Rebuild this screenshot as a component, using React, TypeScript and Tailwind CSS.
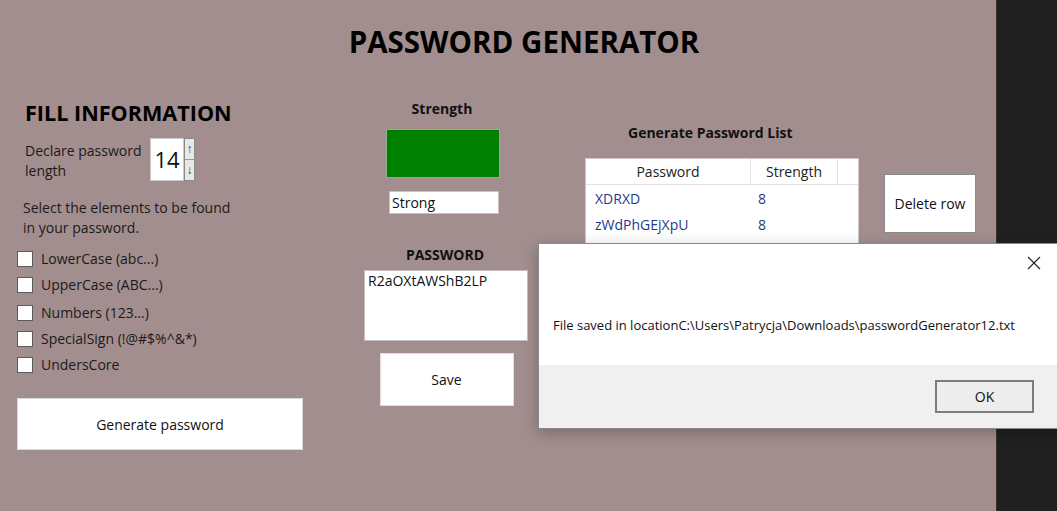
import React from 'react'

const font = { fontFamily: '"Open Sans", "Noto Sans", sans-serif' }

const options = ['LowerCase (abc...)', 'UpperCase (ABC...)', 'Numbers (123...)', 'SpecialSign (!@#$%^&*)', 'UndersCore']

const rows = [
  { password: 'XDRXD', strength: 8 },
  { password: 'zWdPhGEjXpU', strength: 8 },
]

const FillInformation: React.FC = () => {
  return (
    <div className="ml-[17px] w-[286px] pt-[2px]">
      <h2 className="ml-[8px] text-[21.6px] font-bold leading-[26px] text-black">FILL INFORMATION</h2>
      <div className="ml-[8px] mt-[12px] flex items-start">
        <p className="w-[125px] pt-[3px] text-[14px] leading-[20px] text-[#1a1a1a]">Declare password length</p>
        <div className="flex h-[43px]">
          <div className="flex w-[34px] items-center justify-center border border-[#d0c8c8] bg-white text-[22px] text-[#111]">14</div>
          <div className="flex w-[11px] flex-col border border-[#8a8a8a] bg-[#e8e8e8] text-[12px] leading-none text-[#333]">
            <span className="flex flex-1 items-center justify-center border-b border-[#9a9a9a]">↑</span>
            <span className="flex flex-1 items-center justify-center">↓</span>
          </div>
        </div>
      </div>
      <p className="ml-[6px] mt-[17px] w-[220px] text-[14px] leading-[20px] text-[#1a1a1a]">
        Select the elements to be found in your password.
      </p>
      <div className="mt-[12px] flex flex-col gap-[8px]">
        {options.map((o, i) => (
          <label key={o} className={`flex items-center gap-[8px] ${i === 2 ? 'mt-[2px]' : ''}`}>
            <span className="h-[16px] w-[16px] border border-[#5a5a5a] bg-white" />
            <span className="text-[14px] leading-[18px] text-[#1a1a1a]">{o}</span>
          </label>
        ))}
      </div>
      <button className="mt-[24px] h-[52px] w-[286px] border border-[#d8d8d8] bg-white text-[14px] text-[#111]">
        Generate password
      </button>
    </div>
  )
}

const StrengthColumn: React.FC = () => {
  return (
    <div className="ml-[61px] flex w-[164px] flex-col items-center">
      <h3 className="ml-[-8px] mt-[2px] text-[14px] font-bold leading-[18px] text-[#111]">Strength</h3>
      <div className="ml-[-6px] mt-[11px] h-[49px] w-[114px] border border-[#8fb08f] bg-[#008000]" />
      <div className="ml-[-4px] mt-[13px] flex h-[23px] w-[110px] items-center border border-[#c8c0c0] bg-white px-[2px] text-[14px] text-[#111]">
        Strong
      </div>
      <h3 className="ml-[-2px] mt-[32px] text-[14px] font-bold leading-[18px] text-[#111]">PASSWORD</h3>
      <div className="mt-[6px] h-[71px] w-[164px] border border-[#c8c0c0] bg-white px-[3px] pt-[1px] text-[14px] leading-[18px] text-[#111]">
        R2aOXtAWShB2LP
      </div>
      <button className="ml-[1px] mt-[12px] h-[53px] w-[134px] border border-[#ecd8d8] bg-white text-[14px] text-[#111]">
        Save
      </button>
    </div>
  )
}

const PasswordList: React.FC = () => {
  return (
    <div className="ml-[57px] mt-[26px] flex w-[274px] flex-col">
      <h3 className="ml-[43px] text-[14px] font-bold leading-[18px] text-[#111]">Generate Password List</h3>
      <div className="mt-[16px] h-[90px] w-[274px] border border-[#d0c8c8] bg-white">
        <div className="flex h-[26px] border-b border-[#e2e2e2] text-[14px] text-[#222]">
          <div className="flex w-[165px] items-center justify-center border-r border-[#e2e2e2]">Password</div>
          <div className="flex w-[87px] items-center justify-center border-r border-[#e2e2e2]">Strength</div>
        </div>
        {rows.map((r) => (
          <div key={r.password} className="flex h-[26px] items-center text-[14px] text-[#1f3a87]">
            <span className="w-[165px] pl-[9px]">{r.password}</span>
            <span className="pl-[7px]">{r.strength}</span>
          </div>
        ))}
      </div>
    </div>
  )
}

const SavedDialog: React.FC = () => {
  return (
    <div className="absolute left-[538px] top-[243px] flex h-[186px] w-[530px] flex-col border border-[#8a8a8a] bg-white shadow-[0_4px_14px_rgba(0,0,0,0.25)]">
      <div className="relative flex-1">
        <svg className="absolute right-[26px] top-[12px]" width="14" height="14" viewBox="0 0 14 14">
          <path d="M1 1 L13 13 M13 1 L1 13" stroke="#222" strokeWidth="1.1" />
        </svg>
        <p className="pl-[14px] pt-[72px] text-[13px] text-[#111]">
          File saved in locationC:\Users\Patrycja\Downloads\passwordGenerator12.txt
        </p>
      </div>
      <div className="flex h-[63px] items-start justify-end bg-[#f0f0f0] pr-[33px] pt-[15px]">
        <button className="h-[33px] w-[99px] border-2 border-[#7d7d7d] bg-[#ededed] text-[14px] text-[#111]">OK</button>
      </div>
    </div>
  )
}

const App: React.FC = () => {
  return (
    <div className="relative flex h-[511px] w-[1057px] overflow-hidden" style={font}>
      <div className="w-[996px] bg-[#a28e8e]">
        <h1 className="pl-[52px] pt-[23px] text-center text-[29.5px] font-bold leading-[38px] text-black">PASSWORD GENERATOR</h1>
        <div className="mt-[37px] flex items-start">
          <FillInformation />
          <StrengthColumn />
          <PasswordList />
          <button className="ml-[25px] mt-[76px] h-[59px] w-[92px] border border-[#8a8a8a] bg-white text-[14px] text-[#111]">
            Delete row
          </button>
        </div>
      </div>
      <div className="flex-1 border-l border-[#3a3030] bg-[#202020]" />
      <SavedDialog />
    </div>
  )
}

export default App
